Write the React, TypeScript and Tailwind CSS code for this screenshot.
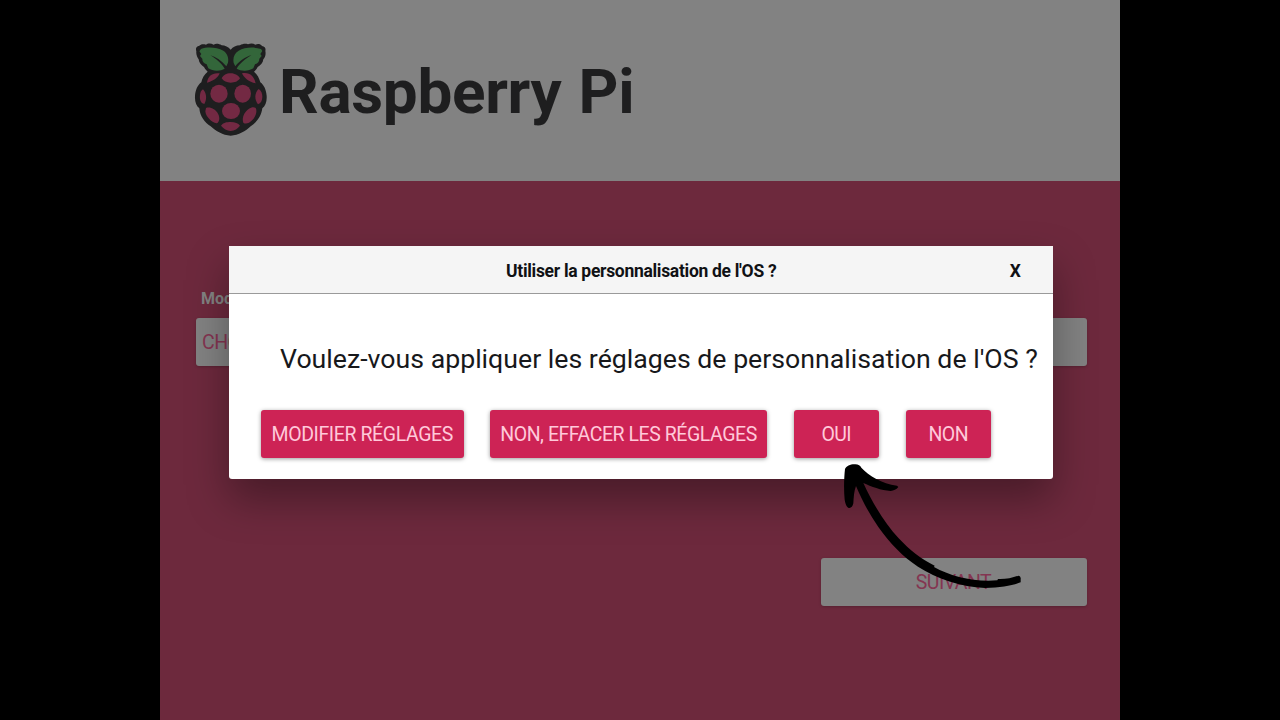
import type { ReactNode } from "react";

function RaspberryLogo() {
  return (
    <svg className="block h-[110px] w-[95px] shrink-0" viewBox="0 0 285 330" aria-label="Raspberry Pi">
      <path
        fill="#1e1e1f"
        d="M137 44 C130 36 120 31 110 31 C102 26 92 25 86 29 C77 24 68 25 63 29 C54 26 46 28 43 32 C34 33 31 40 34 49 C33 58 36 66 41 73 C42 83 49 92 57 96 C60 103 65 107 68 110 C58 118 51 130 49 142 C38 150 31 165 30 183 C29 201 34 213 43 220 C45 244 59 262 77 274 C93 288 113 301 137 302 C161 301 182 288 197 274 C215 262 229 244 232 220 C241 213 246 201 245 183 C244 165 237 150 226 142 C223 130 217 118 207 110 C211 107 215 102 218 96 C227 92 234 83 235 73 C241 66 243 57 241 48 C243 40 240 34 231 33 C226 27 219 26 211 29 C205 25 197 24 189 28 C181 25 172 27 165 31 C153 31 144 36 137 44Z"
      />
      <g fill="#33663a">
        <path d="M48 42 C67 35 96 37 115 47 C127 55 132 69 129 83 L124 94 C109 76 91 65 76 61 C92 71 111 86 119 101 C107 109 83 109 70 100 L65 88 C57 85 51 80 52 71 L45 63 L49 57 L43 49Z" />
        <path d="M228 42 C206 35 178 37 161 47 C148 55 143 68 146 84 L151 94 C165 76 183 65 199 61 C182 71 164 85 155 101 C168 109 191 109 205 100 L210 88 C219 85 223 80 223 71 L230 63 L226 57 L232 48Z" />
      </g>
      <g fill="#732943">
        <path d="M66 143 C68 123 82 112 104 115 C100 127 85 139 66 143Z" />
        <path d="M110 130 C116 120 123 115 137 115 C151 115 160 122 165 130 C158 140 150 143 137 143 C125 143 116 139 110 130Z" />
        <path d="M171 115 C194 111 207 123 212 145 C191 141 177 129 171 115Z" />
        <ellipse cx="102" cy="176" rx="26" ry="27" />
        <ellipse cx="173" cy="176" rx="25" ry="27" />
        <ellipse cx="138" cy="228" rx="27" ry="24" />
        <path d="M54 163 C64 174 67 191 58 207 C47 205 43 193 45 180 C46 171 49 166 54 163Z" />
        <path d="M221 162 C229 167 232 176 232 185 C232 197 227 205 219 208 C208 194 208 174 221 162Z" />
        <path d="M63 219 C74 214 92 222 99 236 C106 249 103 262 95 265 C79 263 62 244 61 229Z" />
        <path d="M212 219 C217 227 213 244 202 255 C192 266 181 268 175 263 C170 250 177 232 191 222 C199 216 207 215 212 219Z" />
        <path d="M108 272 C114 263 125 261 137 261 C150 261 160 265 165 272 C158 281 149 287 137 288 C126 287 115 281 108 272Z" />
      </g>
    </svg>
  );
}

function DimButton({ children }: { children?: ReactNode }) {
  return (
    <div className="flex h-12 w-[266px] items-center justify-center whitespace-nowrap rounded-[3px] bg-[#828282] pt-0.5 text-[19.5px] tracking-[-0.55px] text-[#843551] shadow-[0_1px_3px_rgba(0,0,0,0.2)]">
      {children}
    </div>
  );
}

function ActionButton({ width, children }: { width: string; children: ReactNode }) {
  return (
    <button
      type="button"
      className={`${width} flex h-12 shrink-0 items-center justify-center whitespace-nowrap rounded-[3px] bg-[#cd2355] pt-0.5 text-[19.5px] text-[#ffc9da] shadow-[0_1px_4px_rgba(0,0,0,0.4)]`}
    >
      {children}
    </button>
  );
}

function Dialog() {
  return (
    <div className="absolute left-[229px] top-[246px] h-[233px] w-[824.4px] rounded-b-[3px] bg-white text-black shadow-[0_20px_42px_0px_rgba(0,0,0,0.34)]">
      <div className="grid h-12 grid-cols-[76px_1fr_76px] items-center border-b border-[#9a9a9a] bg-[#f5f5f5] pt-[3px] text-[17.5px] font-bold">
        <span />
        <span className="whitespace-nowrap text-center tracking-[-0.3px] text-[#101114]">Utiliser la personnalisation de l'OS ?</span>
        <span className="text-center text-[#101114]">X</span>
      </div>
      <p className="ml-[51px] mt-[45px] whitespace-nowrap text-[26.7px] leading-10 text-[#17181b]">
        Voulez-vous appliquer les réglages de personnalisation de l'OS ?
      </p>
      <div className="ml-[32px] mt-[31px] flex gap-[26.5px]">
        <ActionButton width="w-[202.5px]"><span className="tracking-[-0.4px]">MODIFIER RÉGLAGES</span></ActionButton>
        <ActionButton width="w-[277px]"><span className="tracking-[-0.45px]">NON, EFFACER LES RÉGLAGES</span></ActionButton>
        <ActionButton width="w-[85.5px]"><span className="tracking-[-0.6px]">OUI</span></ActionButton>
        <ActionButton width="w-[85.5px]"><span className="tracking-[-0.6px]">NON</span></ActionButton>
      </div>
    </div>
  );
}

function Arrow() {
  return (
    <svg className="absolute left-[800px] top-[450px] h-[170px] w-[300px]" viewBox="0 0 900 510" aria-hidden="true">
      <path d="M135 57 C139 47 153 42 166 43 C175 43 181 48 184 53 C207 78 245 100 291 107 L295 111 C289 119 281 122 272 123 C243 121 214 110 190 99 C218 160 254 219 296 265 C330 301 363 328 404 347 L402 351 C452 379 524 397 592 391 L594 387 C616 388 636 384 655 377 C661 378 663 383 662 388 L662 397 C640 406 604 414 555 414 C483 411 410 386 354 350 C309 321 270 280 235 231 C208 192 187 153 168 108 C162 122 161 143 160 160 C158 169 153 175 147 174 C140 172 136 162 134 149 C131 119 132 84 135 57Z" />
    </svg>
  );
}

export default function App() {
  return (
    <main className="relative flex h-[720px] w-[1280px] justify-center overflow-hidden bg-black font-[Roboto,sans-serif]">
      <div className="flex w-[960px] flex-col bg-[#6d293d]">
        <header className="flex h-[181px] shrink-0 items-start bg-[#828282] pl-[25px] pt-[35px]">
          <RaspberryLogo />
          <h1 className="-ml-px mt-[21px] whitespace-nowrap text-[62px] font-bold leading-[72px] tracking-[-0.3px] text-[#1e1e1f] [word-spacing:2px]">Raspberry Pi</h1>
        </header>
        <section className="flex flex-col pl-9 pt-[108px] pr-[33.5px]">
          <div className="ml-[5px] h-[29px] text-[16px] font-bold leading-5 text-[#828282]">Modèle</div>
          <div className="flex justify-between">
            <DimButton><span className="w-full pl-1.5">CHOISIR</span></DimButton>
            <DimButton />
            <DimButton />
          </div>
          <div className="mt-[191.5px] flex justify-end">
            <DimButton>SUIVANT</DimButton>
          </div>
        </section>
      </div>
      <Dialog />
      <Arrow />
    </main>
  );
}
